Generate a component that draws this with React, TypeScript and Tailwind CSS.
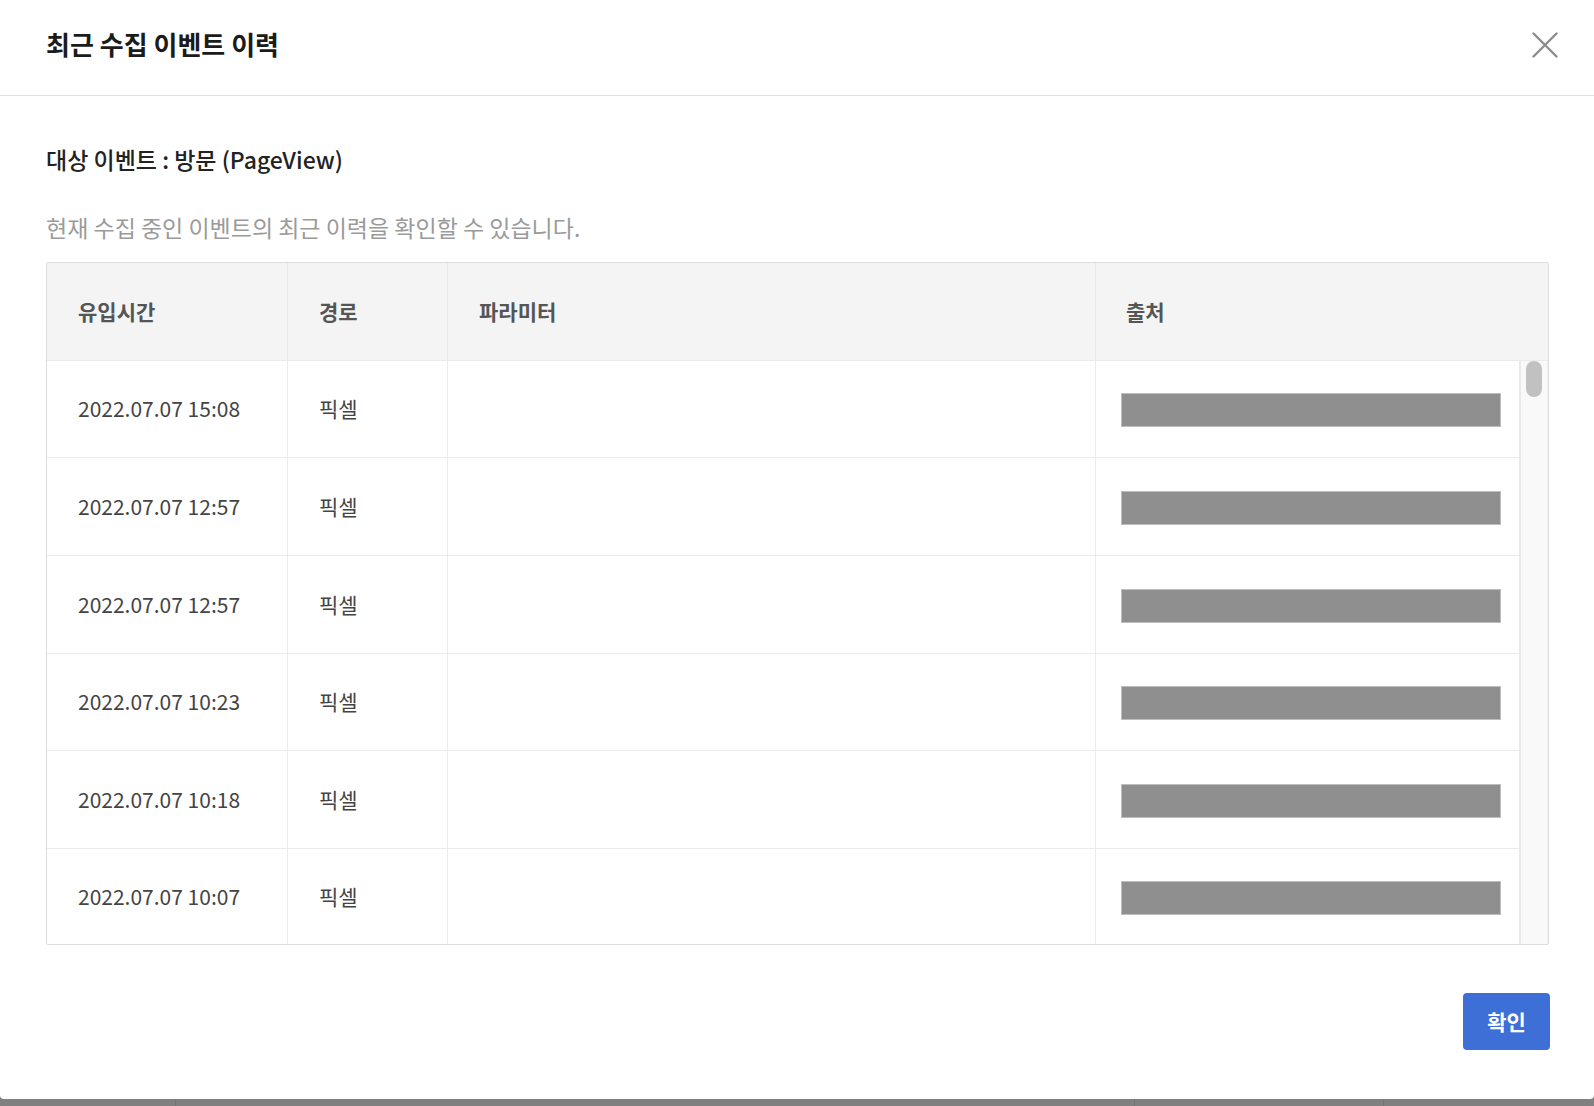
import React from "react";

const rows = [
  { t: "2022.07.07 15:08", h: "h-[97px]" },
  { t: "2022.07.07 12:57", h: "h-[98px]" },
  { t: "2022.07.07 12:57", h: "h-[98px]" },
  { t: "2022.07.07 10:23", h: "h-[97px]" },
  { t: "2022.07.07 10:18", h: "h-[98px]" },
  { t: "2022.07.07 10:07", h: "h-[95px]" },
];

export default function App() {
  return (
    <div className="w-[1594px] h-[1106px] bg-[#808080] flex flex-col font-['Noto_Sans_CJK_KR','Noto_Sans',sans-serif]">
      <div className="bg-white h-[1099px] rounded-b-[4px] flex flex-col shrink-0">
        {/* Header */}
        <div className="h-[96px] shrink-0 border-b border-[#e2e2e2] flex items-center justify-between pl-[46px] pr-[36px] pb-[7px]">
          <h1 className="text-[26px] leading-[32px] font-bold text-[#1b1b1b]">
            최근 수집 이벤트 이력
          </h1>
          <button className="w-[26px] h-[26px] mt-[2px] flex items-center justify-center" aria-label="닫기">
            <svg width="26" height="26" viewBox="0 0 26 26" fill="none">
              <path d="M1.5 1.5L24.5 24.5M24.5 1.5L1.5 24.5" stroke="#8c8c8c" strokeWidth="2.4" strokeLinecap="round" />
            </svg>
          </button>
        </div>

        {/* Body */}
        <div className="flex flex-col pl-[46px] pr-[45px] pt-[47px]">
          <p className="text-[23px] leading-[32px] font-medium text-[#222]">대상 이벤트 : 방문 (PageView)</p>
          <p className="mt-[36px] text-[23px] leading-[32px] text-[#9a9a9a]">
            현재 수집 중인 이벤트의 최근 이력을 확인할 수 있습니다.
          </p>

          {/* Table */}
          <div className="mt-[19px] border border-[#dcdcdc] rounded-[2px] overflow-hidden">
            <div className="grid grid-cols-[241px_160px_648px_1fr] h-[98px] bg-[#f4f4f4] border-b border-[#ebebeb] text-[21px] font-bold text-[#555]">
              <div className="flex items-center pl-[31px] border-r border-[#e8e8e8]">유입시간</div>
              <div className="flex items-center pl-[31px] border-r border-[#e8e8e8]">경로</div>
              <div className="flex items-center pl-[31px] border-r border-[#e8e8e8]">파라미터</div>
              <div className="flex items-center pl-[30px]">출처</div>
            </div>
            <div className="flex">
              <div className="flex-1 flex flex-col">
                {rows.map((r, i) => (
                  <div
                    key={i}
                    className={`grid grid-cols-[241px_160px_648px_1fr] ${r.h} text-[21px] text-[#444] ${
                      i < rows.length - 1 ? "border-b border-[#ebebeb]" : ""
                    }`}
                  >
                    <div className="flex items-center pl-[31px] border-r border-[#ececec]">{r.t}</div>
                    <div className="flex items-center pl-[31px] border-r border-[#ececec]">픽셀</div>
                    <div className="border-r border-[#ececec]" />
                    <div className="flex items-center pl-[25px] pr-[18px] pt-[2px]">
                      <div className="h-[34px] w-full bg-[#8f8f8f] border border-[#bdbdbd]" />
                    </div>
                  </div>
                ))}
              </div>
              <div className="w-[29px] shrink-0 bg-[#f9f9f9] border-l-2 border-r border-[#e9e9e9] border-r-[#f1f1f1]">
                <div className="ml-[5px] w-[16px] h-[36px] rounded-full bg-[#c1c1c1]" />
              </div>
            </div>
          </div>

          <div className="flex justify-end mt-[48px] -mr-px">
            <button className="w-[87px] h-[57px] rounded-[4px] bg-[#3d6fd6] text-white text-[21px] font-bold leading-none">
              확인
            </button>
          </div>
        </div>
      </div>
      <div className="flex-1 flex">
        <div className="w-[176px] border-r border-[#747474]" />
        <div className="w-[959px] border-r border-[#747474]" />
        <div className="w-[249px] border-r border-[#747474]" />
        <div className="flex-1" />
      </div>
    </div>
  );
}
